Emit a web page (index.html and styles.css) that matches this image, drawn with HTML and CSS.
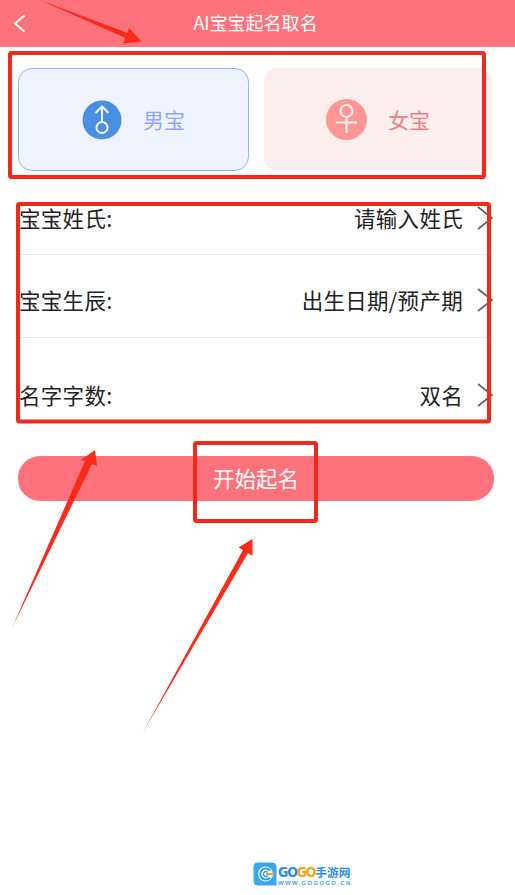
FILE: index.html
```html
<!DOCTYPE html>
<html lang="zh-CN">
<head>
  <meta charset="UTF-8" />
  <meta name="viewport" content="width=device-width, initial-scale=1.0"/>
  <title>AI宝宝起名取名</title>
  <link rel="stylesheet" href="styles.css">
</head>
<body>
  <header class="top-bar">
    <svg class="back-icon" width="13" height="19" viewBox="0 0 13 19">
      <path d="M11.5 1.5 L2 9.5 L11.5 17.5" fill="none" stroke="#fff" stroke-width="2"/>
    </svg>
    <h1 class="top-title">AI宝宝起名取名</h1>
  </header>

  <div class="gender-row">
    <div class="gender-card male">
      <svg width="40" height="40" viewBox="0 0 40 40">
        <circle cx="20" cy="20" r="19.5" fill="#4a90e2"/>
        <circle cx="20" cy="27.5" r="5.5" fill="none" stroke="#f2f6ff" stroke-width="2"/>
        <path d="M20 22 V6.5 M13.5 13 L20 6.5 L26.5 13" fill="none" stroke="#f2f6ff" stroke-width="2"/>
      </svg>
      <span class="gender-label">男宝</span>
    </div>
    <div class="gender-card female">
      <svg width="41" height="41" viewBox="0 0 41 41">
        <circle cx="20.5" cy="20.5" r="20.5" fill="#ff9595"/>
        <circle cx="20.5" cy="12" r="6" fill="none" stroke="#fff0f0" stroke-width="2"/>
        <path d="M20.5 18 V34 M10 23.5 H31" fill="none" stroke="#fff0f0" stroke-width="2"/>
      </svg>
      <span class="gender-label">女宝</span>
    </div>
  </div>

  <div class="form-list">
    <div class="form-row surname">
      <span>宝宝姓氏:</span>
      <span class="form-value">请输入姓氏</span>
      <svg class="row-arrow" width="16" height="24" viewBox="0 0 16 24"><path d="M1 1 L15 12 L1 23" fill="none" stroke="#6b5a5a" stroke-width="1.6"/></svg>
    </div>
    <div class="form-row birth">
      <span>宝宝生辰:</span>
      <span class="form-value">出生日期/预产期</span>
      <svg class="row-arrow" width="16" height="24" viewBox="0 0 16 24"><path d="M1 1 L15 12 L1 23" fill="none" stroke="#6b5a5a" stroke-width="1.6"/></svg>
    </div>
    <div class="form-row count">
      <span>名字字数:</span>
      <span class="form-value">双名</span>
      <svg class="row-arrow" width="16" height="24" viewBox="0 0 16 24"><path d="M1 1 L15 12 L1 23" fill="none" stroke="#6b5a5a" stroke-width="1.6"/></svg>
    </div>
  </div>

  <button class="start-btn">开始起名</button>

  <footer class="site-logo">
    <svg width="24" height="24" viewBox="0 0 24 24">
      <path d="M5 0.5 H19 Q23.5 0.5 23.5 5 V23.5 H5 Q0.5 23.5 0.5 19 V5 Q0.5 0.5 5 0.5 Z" fill="#3aa8ea"/>
      <circle cx="12.5" cy="12" r="7.5" fill="#fff"/>
      <path d="M17 8.5 A5.5 5.5 0 1 0 17 15.5" fill="none" stroke="#2b9fe6" stroke-width="2"/>
      <path d="M15 10.5 A2.5 2.5 0 1 0 15 13.5" fill="none" stroke="#2b9fe6" stroke-width="1.5"/>
      <path d="M13 12 H21" stroke="#f5a31a" stroke-width="2"/>
    </svg>
    <div class="logo-text">
      <div class="logo-name"><span class="logo-go logo-blue">GO</span><span class="logo-go logo-orange">GO</span><span class="logo-cn logo-blue">手游网</span></div>
      <div class="logo-url">WWW.GOGOGO.CN</div>
    </div>
  </footer>

  <!-- marcas rojas encima de la captura -->
  <svg class="marks" width="515" height="895" viewBox="0 0 515 895">
    <rect x="10" y="53" width="474" height="124" rx="1.5"/>
    <rect x="18" y="204" width="471" height="217.5" rx="1.5"/>
    <rect x="195" y="443" width="121" height="78" rx="1.5"/>
    <polygon points="40,0 127.5,33 129,28 141.5,41.5 123,43.5 125.5,38"/>
    <polygon points="12,628 85,461 81,460 95,450 97,466 92,464"/>
    <polygon points="142.5,733 243,550 238.5,547.5 252.5,539 252.5,556 248,553"/>
  </svg>
</body>
</html>
```

FILE: styles.css
```css
body {
  position: relative;
  display: flex;
  flex-direction: column;
  min-height: 895px;
  margin: 0;
  background-color: #fff;
  font-family: "Noto Sans CJK SC", "Noto Sans", sans-serif;
  color: #222;
}
.top-bar {
  display: flex;
  align-items: center;
  justify-content: center;
  position: relative;
  height: 47px;
  background-color: #ff717b;
}
.back-icon {
  position: absolute;
  left: 13px;
  top: 14px;
}
.top-title {
  margin: 0 4px 3px 0;
  font-size: 18px;
  font-weight: 400;
  color: #fff;
}
.gender-row {
  display: flex;
  gap: 15px;
  margin: 21px 23px 0 18px;
}
.gender-card {
  display: flex;
  flex: 1;
  align-items: center;
  justify-content: center;
  gap: 21px;
  height: 103px;
  box-sizing: border-box;
  border-radius: 14px;
}
.gender-card.male {
  flex: 0 0 231px;
  background-color: #eff3ff;
  border: 1px solid #8fb4ea;
}
.gender-card.female {
  background-color: #fdeeee;
}
.gender-label {
  padding-bottom: 2px;
  font-size: 21px;
}
.male .gender-label {
  color: #8fa8ef;
}
.female .gender-label {
  color: #ee8080;
}
.form-list {
  margin: 32px 22px 0 19px;
}
.form-row {
  display: flex;
  align-items: center;
  height: 30px;
  font-size: 21.5px;
  line-height: 30px;
  letter-spacing: 0.3px;
}
.form-row.surname {
  padding-bottom: 21px;
  border-bottom: 1px solid #e8e8e8;
}
.form-row.birth {
  padding-top: 30px;
  padding-bottom: 22px;
  border-bottom: 1px solid #e8e8e8;
}
.form-row.count {
  padding-top: 42px;
}
.form-value {
  margin-left: auto;
}
.row-arrow {
  flex: none;
  margin: 0 0 0 14px;
}
.start-btn {
  display: block;
  width: 476px;
  height: 45px;
  margin: 46px 0 0 18px;
  padding: 0 0 2px;
  border: none;
  border-radius: 22px;
  background-color: #ff717b;
  color: #fff;
  font-family: inherit;
  font-size: 21.5px;
}
.site-logo {
  display: flex;
  align-items: flex-start;
  gap: 1px;
  margin: auto 0 9px 253px;
}
.logo-text {
  line-height: 1;
}
.logo-name {
  display: flex;
  align-items: center;
  height: 17px;
  margin-top: 1px;
  font-weight: 700;
}
.logo-go {
  font-family: "DejaVu Sans Condensed", sans-serif;
  font-size: 14px;
  letter-spacing: -1.2px;
}
.logo-cn {
  font-size: 11.7px;
}
.logo-blue {
  color: #2b8fe0;
}
.logo-orange {
  color: #f5a31a;
}
.logo-url {
  font-family: "Liberation Sans", sans-serif;
  font-size: 6px;
  font-weight: 700;
  letter-spacing: 1.3px;
  color: #4aa5e6;
}
.marks {
  position: absolute;
  top: 0;
  left: 0;
  pointer-events: none;
}
.marks rect {
  fill: none;
  stroke: #ee2a1e;
  stroke-width: 4;
}
.marks polygon {
  fill: #fb2a1a;
}
```
